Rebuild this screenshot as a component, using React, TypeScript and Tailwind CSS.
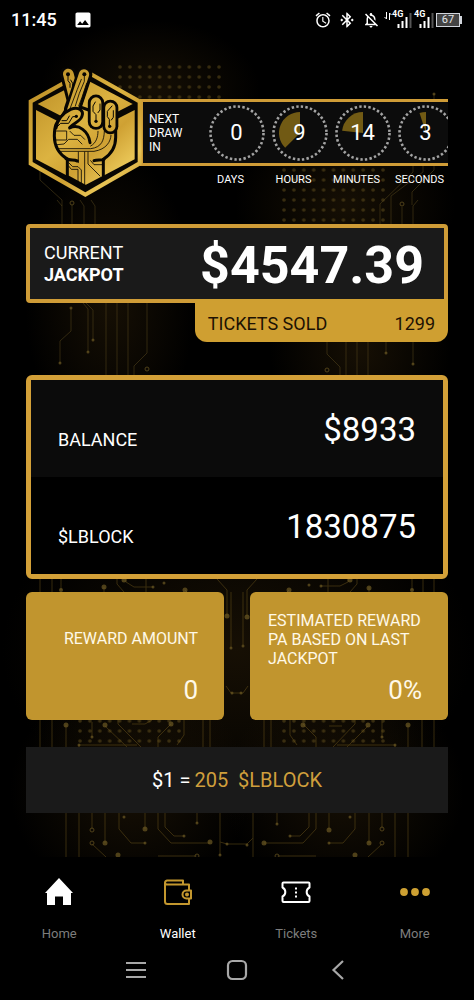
import type { ReactNode } from "react";
import { MdAlarm, MdBluetoothConnected, MdImage, MdOutlineNotificationsOff } from "react-icons/md";

const timers = [
  { label: "DAYS", value: 0, max: 30 },
  { label: "HOURS", value: 9, max: 24 },
  { label: "MINUTES", value: 14, max: 60 },
  { label: "SECONDS", value: 3, max: 60 },
];

const dotGrids = [
  { x: 120, y: 67, rows: 4 },
  { x: 284, y: 170, rows: 6 },
  { x: 80, y: 721, rows: 3 },
  { x: 284, y: 721, rows: 3 },
];

const upperTraces = [
  "M434 94V170L412 192V205M423 165V172L391 196V224M413 165V172L380 204V224M402 207V224M418 200L413 206V224",
  "M40 95V180L62 200V224M57 200L62 206M72 205V224M80 200L84 206V224M91 200L95 206V224",
  "M71 308V331L60 341V363M83 303L88 309V352M86 303L93 310V340M106 303V375M117 303V375M128 303V375M147 303V353L134 366V375",
  "M327 342V354L340 367V375M346 342V375M357 342V375M368 342V375M386 342V353M413 342V364",
];

const lowerTraces = [
  "M40 579V592M52 579V592M61 579V590M104 587V592M117 579V584L124 592M126 579V582L134 587H153M146 579V592M217 579L227 590V616M185 590L190 595",
  "M434 579V592M423 579V592M412 579V590M369 587V592M357 579V584L350 592M348 579V582L340 586H321M328 579V592M257 579L247 590V616M289 590L284 595",
  "M231 592V648M243 592V645M226 686L231 693H243L248 686",
  "M40 720V747M52 720V747M66 725V857M79 745V857M105 726L127 747M118 720V724L141 747M132 724H145L152 720M171 724L158 737V747M184 720V735L177 745M203 720V747M210 720V747",
  "M434 720V747M422 720V747M408 725V857M395 745V857M368 726L347 747M355 720V724L333 747M342 726H329M303 724L316 737V747M290 720V735L297 745M271 720V747M264 720V747",
  "M79 745H137M337 745H395M92 722V737M382 722V737",
  "M92 813V829M105 813V843M92 844L106 857M119 813V829L131 843H145M145 813V829M158 813V829L171 843H210M165 813V827L174 836H184M197 813V823M220 813V855M220 842L227 844H247L253 838M158 856H197",
  "M382 813V829M369 813V843M382 844L368 857M355 813V829L343 843H329M329 813V829M316 813V829L303 843H264M309 813V827L300 836H290M277 813V824M253 813V857M316 856H277",
];

const nodes = [
  [60, 363, 1.5], [88, 352, 1.5], [93, 340, 1.5], [71, 308, 1.5], [386, 353, 1.5], [413, 364, 1.5], [434, 94, 1.5],
  [61, 590, 2], [104, 587, 2.5], [124, 580, 2.5], [185, 590, 2.5], [153, 587, 1.5], [164, 583, 1.5],
  [412, 590, 2], [369, 588, 2.5], [350, 580, 2.5], [289, 590, 2.5], [321, 586, 1.5], [309, 585, 1.5],
  [227, 616, 2.5], [247, 617, 2.5], [231, 648, 1.5], [243, 646, 1.5], [232, 693, 1.5], [241, 693, 1.5],
  [66, 725, 2.5], [105, 725, 2.5], [171, 724, 2.5], [303, 725, 2.5], [368, 725, 2.5], [408, 725, 2.5], [92, 737, 1.5], [382, 737, 1.5],
  [79, 745, 1.5], [395, 745, 1.5], [105, 843, 2.5], [145, 829, 2.5], [210, 842, 2.5], [264, 843, 2.5], [329, 830, 2.5], [369, 843, 2.5],
  [124, 817, 1.5], [350, 817, 1.5], [145, 843, 1.5], [329, 843, 1.5], [184, 836, 1.5], [290, 836, 1.5], [197, 823, 1.5],
  [277, 824, 1.5], [227, 844, 1.5], [247, 845, 1.5], [220, 855, 1.5], [118, 855, 2.5], [355, 855, 2.5],
];

const rings = [
  [72, 203], [402, 204], [147, 369], [327, 370], [92, 830], [92, 843], [382, 829], [382, 843], [197, 856], [277, 856],
];

const CircuitBackground = () => (
  <svg
    className="absolute inset-0 h-full w-full"
    viewBox="0 0 474 857"
    preserveAspectRatio="xMidYMin slice"
    aria-hidden="true"
  >
    <defs>
      <radialGradient id="glow">
        <stop offset="0" stopColor="#201606" stopOpacity="0.7" />
        <stop offset="1" stopColor="#201606" stopOpacity="0" />
      </radialGradient>
      <pattern id="dots" width="9.9" height="10" patternUnits="userSpaceOnUse" x="0" y="0">
        <circle cx="3" cy="3" r="1.8" fill="#65521d" />
      </pattern>
    </defs>
    <ellipse cx="150" cy="90" rx="110" ry="70" fill="url(#glow)" />
    <ellipse cx="345" cy="205" rx="110" ry="90" fill="url(#glow)" />
    <ellipse cx="110" cy="300" rx="85" ry="150" fill="url(#glow)" />
    <ellipse cx="360" cy="350" rx="90" ry="100" fill="url(#glow)" />
    <ellipse cx="237" cy="650" rx="235" ry="170" fill="url(#glow)" />
    <ellipse cx="130" cy="790" rx="120" ry="110" fill="url(#glow)" />
    <ellipse cx="344" cy="790" rx="120" ry="110" fill="url(#glow)" />
    {dotGrids.map((g) => (
      <g key={`${g.x}-${g.y}`} transform={`translate(${g.x - 3} ${g.y - 3})`} opacity="0.5">
        <rect width="108" height={g.rows * 10} fill="url(#dots)" />
      </g>
    ))}
    <g fill="none" stroke="#5a4a1e" opacity="0.5">
      {upperTraces.map((d) => (
        <path key={d} d={d} />
      ))}
    </g>
    <g fill="none" stroke="#6b541b" opacity="0.5">
      {lowerTraces.map((d) => (
        <path key={d} d={d} />
      ))}
    </g>
    <g fill="#6d5a24" opacity="0.7">
      {nodes.map(([x, y, r]) => (
        <circle key={`${x}-${y}`} cx={x} cy={y} r={r} />
      ))}
    </g>
    <g fill="#0d0904" stroke="#6d5a24" opacity="0.7">
      {rings.map(([x, y]) => (
        <circle key={`${x}-${y}`} cx={x} cy={y} r="2" />
      ))}
    </g>
  </svg>
);

const Logo = () => (
  <svg
    className="relative z-10 h-[130px] w-[114px] shrink-0"
    viewBox="24 24 342 390"
    role="img"
    aria-label="Lucky Block"
    strokeLinecap="round"
    strokeLinejoin="round"
  >
    <defs>
      <linearGradient id="gold" gradientUnits="userSpaceOnUse" x1="26" y1="40" x2="366" y2="400">
        <stop offset="0" stopColor="#b88a22" />
        <stop offset="0.45" stopColor="#dcb341" />
        <stop offset="0.62" stopColor="#cfa133" />
        <stop offset="0.8" stopColor="#e8c455" />
        <stop offset="1" stopColor="#c08f2a" />
      </linearGradient>
    </defs>
    <path d="M196 26L365 121V314L196 411L26 314V121Z" fill="url(#gold)" />
    <path d="M196 40L353 128V306L196 397L38 306V128Z" fill="#080603" />
    <path d="M53 132L196 58L338 132L196 205Z" fill="url(#gold)" />
    <path d="M48 150L196 226V376L48 298Z" fill="url(#gold)" />
    <path d="M344 150L196 226V376L344 298Z" fill="url(#gold)" />

    {/* index finger, behind */}
    <path d="M145 42L163 112" stroke="#080603" strokeWidth="50" />
    <path d="M192 43L157 148" stroke="#080603" strokeWidth="50" />
    <path d="M145 42L163 112" stroke="url(#gold)" strokeWidth="32" />
    <path d="M144 44V62L150 70V82M152 60L158 70V98" fill="none" stroke="#080603" strokeWidth="3" />
    <circle cx="144" cy="43" r="6" fill="#080603" />

    {/* palm and wrist */}
    <path
      d="M150 130L126 168C108 184 103 200 103 228C103 254 114 280 142 297V350L197 380L250 352V298C272 284 287 262 287 232V200L206 150Z"
      fill="url(#gold)"
      stroke="#080603"
      strokeWidth="9"
    />

    {/* middle finger */}
    <path d="M192 43L157 150" stroke="#080603" strokeWidth="46" />
    <path d="M192 43L157 150" stroke="url(#gold)" strokeWidth="31" />
    <path d="M193 44V64L178 100L166 138M184 58L172 88L150 146M200 70L186 112L176 138" fill="none" stroke="#080603" strokeWidth="2.500" />
    <circle cx="193" cy="43" r="6" fill="#080603" />

    {/* ring finger and pinky, folded */}
    <path d="M228 128V185" stroke="#080603" strokeWidth="49" />
    <path d="M271 143V199" stroke="#080603" strokeWidth="48" />
    <path d="M228 128V185" stroke="url(#gold)" strokeWidth="32" />
    <path d="M271 143V199" stroke="url(#gold)" strokeWidth="31" />
    <path
      d="M228 181V164L219 154V138L226 126M234 158L240 150V132M268 197V178L262 170V154L276 138M274 180L280 172V152"
      fill="none"
      stroke="#080603"
      strokeWidth="3"
    />
    <circle cx="228" cy="184" r="5" fill="#080603" />
    <circle cx="269" cy="199" r="5" fill="#080603" />

    {/* thumb */}
    <path
      d="M108 204C112 182 126 160 152 148C176 138 192 152 186 168C182 184 160 190 150 202"
      fill="url(#gold)"
      stroke="#080603"
      strokeWidth="9"
    />
    <path d="M149 204C176 190 206 214 210 248" fill="none" stroke="#080603" strokeWidth="9" />
    <path d="M110 202L122 190H146L158 170H168M126 182H140L148 168" fill="none" stroke="#080603" strokeWidth="3" />
    <circle cx="169" cy="169" r="5" fill="#080603" />
    <path
      d="M108 213H140V240H108M150 214L162 226H182L194 238M112 254L132 252L146 238H172L186 252M112 266H212C246 262 252 240 253 214M122 274H222C260 268 272 244 273 226M212 258C228 250 234 232 234 214"
      fill="none"
      stroke="#080603"
      strokeWidth="2.500"
    />
    <path d="M138 296C150 303 160 298 172 303M252 298C242 302 232 298 222 302" fill="none" stroke="#080603" strokeWidth="9" />
    <path
      d="M146 308L158 320H174L184 330V368M146 318L154 328H174V362M175 276V308M194 276V374M204 276V312L240 348M212 302L222 314H246"
      fill="none"
      stroke="#080603"
      strokeWidth="2.500"
    />
  </svg>
);

const TimerDial = ({ value, max }: { value: number; max: number }) => {
  const angle = (value / max) * Math.PI * 2;
  const x = 31 - 21 * Math.sin(angle);
  const y = 31 - 21 * Math.cos(angle);
  return (
    <div className="relative flex h-[61px] w-[63px] shrink-0 items-center justify-center">
      <svg className="absolute h-[62px] w-[62px]" viewBox="0 0 62 62" aria-hidden="true">
        {value > 0 && (
          <path d={`M31 31V10A21 21 0 ${angle > Math.PI ? 1 : 0} 0 ${x} ${y}Z`} fill="#715a14" />
        )}
        <circle cx="31" cy="31" r="26.5" fill="none" stroke="#a3a3a3" strokeWidth="2.6" strokeDasharray="2.4 2.225" />
      </svg>
      <span className="relative text-[22px] leading-6">{value}</span>
    </div>
  );
};

const Countdown = () => (
  <div className="-ml-0.5 min-w-0 flex-1 pt-[31px]">
    <div className="flex items-center overflow-hidden border-y-3 border-l-3 border-[#cf9c37] bg-[#0c0c0c]">
      <p className="w-[62px] shrink-0 pl-1.5 text-[12px] leading-[14px]">
        NEXT
        <br />
        DRAW
        <br />
        IN
      </p>
      {timers.map((t) => (
        <TimerDial key={t.label} value={t.value} max={t.max} />
      ))}
    </div>
    <div className="ml-[59px] mt-1.5 flex">
      {timers.map((t) => (
        <span key={t.label} className="w-[63px] shrink-0 text-center text-[11px] leading-4">
          {t.label}
        </span>
      ))}
    </div>
  </div>
);

const SignalBars = () => (
  <svg className="h-4 w-4" viewBox="0 0 16 16" aria-hidden="true">
    <path d="M2.5 16V12M6.5 16V9M10.5 16V5" stroke="#fff" strokeWidth="2" />
    <path d="M14.5 16V1" stroke="#555" strokeWidth="2" />
  </svg>
);

const StatusBar = () => (
  <div className="relative flex h-10 items-center justify-between pl-[11px] pr-3">
    <div className="flex items-center gap-4">
      <span className="text-[18px] font-medium leading-6">11:45</span>
      <MdImage className="h-5 w-5" />
    </div>
    <div className="flex items-center">
      <MdAlarm className="h-[18px] w-[18px]" />
      <MdBluetoothConnected className="ml-1.5 h-[18px] w-[18px]" />
      <MdOutlineNotificationsOff className="ml-1.5 h-[18px] w-[18px]" />
      <svg className="mb-2 ml-1 h-2 w-2" viewBox="0 0 8 8" fill="none" stroke="#fff" aria-hidden="true">
        <path d="M2.5 0V7L0.5 5M5.5 8V1L7.5 3" />
      </svg>
      <div className="relative flex w-5 justify-end">
        <span className="absolute -top-1 left-0 text-[9px] font-bold leading-3">4G</span>
        <SignalBars />
      </div>
      <div className="relative ml-0.5 flex w-5 justify-end">
        <span className="absolute -top-1 left-0 text-[9px] font-bold leading-3">4G</span>
        <SignalBars />
      </div>
      <div className="ml-0.5 flex h-[14px] w-6 items-center justify-center border border-gray-300 bg-[#444] text-[11px] leading-3 text-gray-200">
        67
      </div>
      <div className="h-2 w-0.5 bg-gray-300" />
    </div>
  </div>
);

const Jackpot = () => (
  <section className="mt-[26px]">
    <div className="flex h-[79px] items-center justify-between rounded border-4 border-[#cf9c37] bg-[#1a1a1a] pl-[14px] pr-5">
      <p className="text-[18px] leading-[22px]">
        CURRENT
        <br />
        <b>JACKPOT</b>
      </p>
      <p className="pt-1 text-[52px] font-bold leading-[60px]">$4547.39</p>
    </div>
    <div className="-mt-1 ml-auto flex h-[43px] w-3/5 items-center justify-between rounded-b-xl bg-[#cf9f31] pl-[13px] pr-[13px] pt-1.5 text-[18px] leading-6 text-[#1d1203]">
      <span>TICKETS SOLD</span>
      <span>1299</span>
    </div>
  </section>
);

const BalanceRow = ({ label, value }: { label: string; value: string }) => (
  <div className="flex h-[97px] items-end justify-between pb-6 pl-[27px] pr-[27px] odd:bg-[#0b0b0b] even:bg-black">
    <span className="text-[18px] leading-[26px]">{label}</span>
    <span className="text-[33px] leading-[46px]">{value}</span>
  </div>
);

const homeIcon = (
  <svg className="h-8 w-8" viewBox="0 0 32 32" fill="#fff" aria-hidden="true">
    <path d="M16 2L30 17H28V29H20V20.500H12V29H4V17H2Z" />
  </svg>
);

const walletIcon = (
  <svg className="h-8 w-8" viewBox="0 0 32 32" fill="none" stroke="#c3972e" strokeWidth="2" strokeLinejoin="round" aria-hidden="true">
    <path d="M21 8V4.500H5A2.500 2.500 0 0 0 3 7V25.500A2.500 2.500 0 0 0 5.500 28H27V23M27 14V8.500H5A2 2 0 0 1 3 6.500" />
    <path d="M29 14.500H24.500A4 4 0 0 0 24.500 22.500H29Z" />
    <circle cx="25" cy="18.500" r="1" />
  </svg>
);

const ticketIcon = (
  <svg className="h-8 w-8" viewBox="0 0 32 32" fill="none" stroke="#fff" strokeWidth="2" strokeLinejoin="round" aria-hidden="true">
    <path d="M3.500 6.500H28.500Q29.500 6.500 29.500 7.500V11.500A5 5 0 0 0 29.500 20.500V25Q29.500 26 28.500 26H3.500Q2.500 26 2.500 25V20.500A5 5 0 0 0 2.500 11.500V7.500Q2.500 6.500 3.500 6.500Z" />
    <path d="M16 11.500V21.500" strokeDasharray="2 2" />
  </svg>
);

const moreIcon = (
  <svg className="h-8 w-8" viewBox="0 0 32 32" fill="#cda032" aria-hidden="true">
    <circle cx="5" cy="16" r="3.900" />
    <circle cx="16" cy="16" r="3.900" />
    <circle cx="27" cy="16" r="3.900" />
  </svg>
);

const NavItem = ({ icon, label, active }: { icon: ReactNode; label: string; active?: boolean }) => (
  <button type="button" className="flex flex-col items-center gap-4">
    {icon}
    <span className={active ? "text-[13px] leading-5 text-white" : "text-[13px] leading-5 text-[#7d7d7d]"}>{label}</span>
  </button>
);

const SystemNav = () => (
  <div className="flex h-[52px] items-center justify-center gap-[77px] text-[#a8a8a8]">
    <button type="button" aria-label="Recent apps">
      <svg className="h-6 w-6" viewBox="0 0 24 24" stroke="currentColor" strokeWidth="2.2" aria-hidden="true">
        <path d="M2 5H22M2 12H22M2 19H22" />
      </svg>
    </button>
    <button type="button" aria-label="Home screen">
      <svg className="h-6 w-6" viewBox="0 0 24 24" fill="none" stroke="currentColor" strokeWidth="2.2" aria-hidden="true">
        <rect x="3" y="3" width="18" height="18" rx="4.500" />
      </svg>
    </button>
    <button type="button" aria-label="Back">
      <svg className="h-6 w-6" viewBox="0 0 24 24" fill="none" stroke="currentColor" strokeWidth="2.2" aria-hidden="true">
        <path d="M17 3L7.500 12L17 21" />
      </svg>
    </button>
  </div>
);

export default function App() {
  return (
    <div className="min-h-screen w-full bg-black font-['Roboto',sans-serif] text-white">
      <div className="relative overflow-hidden pb-11">
        <CircuitBackground />
        <StatusBar />
        <main className="relative px-[26px] pt-7">
          <header className="flex pl-0.5">
            <Logo />
            <Countdown />
          </header>
          <Jackpot />
          <section className="mt-[33px] rounded-md border-5 border-[#d3a038]">
            <BalanceRow label="BALANCE" value="$8933" />
            <BalanceRow label="$LBLOCK" value="1830875" />
          </section>
          <section className="mt-[13px] grid grid-cols-2 gap-[26px] text-[#fff9e8]">
            <div className="flex h-32 flex-col justify-between rounded-md bg-[#c1952e] pb-3 pr-[26px] pt-[37px] text-right">
              <p className="text-[16px] leading-[19px]">REWARD AMOUNT</p>
              <p className="text-[26px] leading-9">0</p>
            </div>
            <div className="flex h-32 flex-col justify-between rounded-md bg-[#c1952e] pb-3 pl-[18px] pr-[26px] pt-[19px]">
              <p className="text-[16px] leading-[19px]">
                ESTIMATED REWARD
                <br />
                PA BASED ON LAST
                <br />
                JACKPOT
              </p>
              <p className="text-right text-[26px] leading-9">0%</p>
            </div>
          </section>
          <p className="mt-[27px] flex h-[66px] items-center justify-center gap-1 bg-[#1a1a1a] text-[20px] leading-6">
            <span>$1 =</span>
            <span className="text-[#cf9f3c]">205 &nbsp;$LBLOCK</span>
          </p>
        </main>
      </div>
      <nav className="grid grid-cols-4 pt-[19px]">
        <NavItem icon={homeIcon} label="Home" />
        <NavItem icon={walletIcon} label="Wallet" active />
        <NavItem icon={ticketIcon} label="Tickets" />
        <NavItem icon={moreIcon} label="More" />
      </nav>
      <SystemNav />
    </div>
  );
}
